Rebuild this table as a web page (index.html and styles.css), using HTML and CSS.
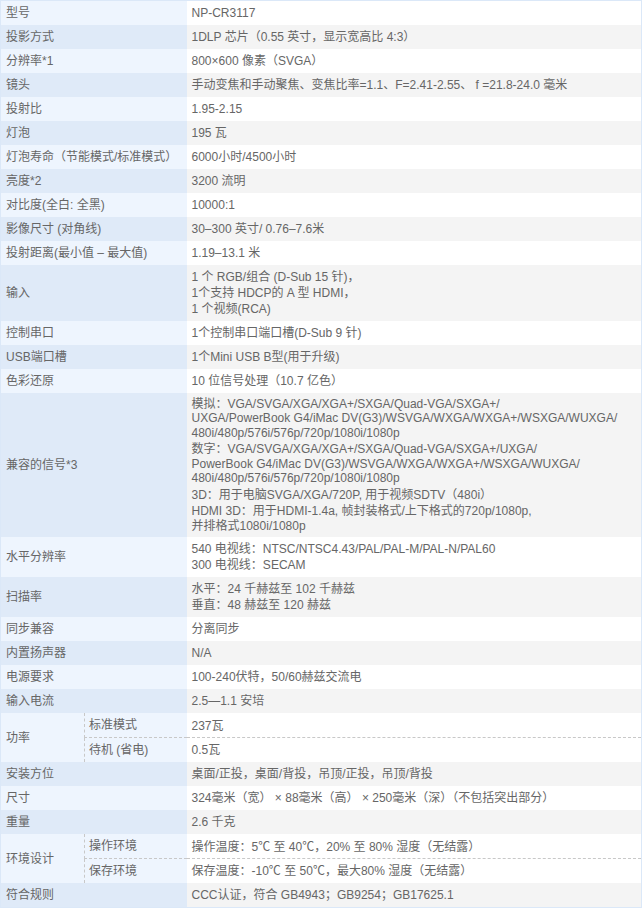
FILE: index.html
```html
<!DOCTYPE html>
<html lang="zh">
<head>
<meta charset="utf-8">
<link rel="stylesheet" href="styles.css">
</head>
<body>
<table class="spec">
<colgroup><col class="c1"><col class="c2"><col class="c3"></colgroup>
<tbody>
<tr class="odd"><th colspan="2">型号</th><td>NP-CR3117</td></tr>
<tr class="even"><th colspan="2">投影方式</th><td>1DLP 芯片（0.55 英寸，显示宽高比 4:3）</td></tr>
<tr class="odd"><th colspan="2">分辨率*1</th><td>800×600 像素（SVGA）</td></tr>
<tr class="even"><th colspan="2">镜头</th><td>手动变焦和手动聚焦、变焦比率=1.1、F=2.41-2.55、 f =21.8-24.0 毫米</td></tr>
<tr class="odd"><th colspan="2">投射比</th><td>1.95-2.15</td></tr>
<tr class="even"><th colspan="2">灯泡</th><td>195 瓦</td></tr>
<tr class="odd"><th colspan="2">灯泡寿命（节能模式/标准模式）</th><td>6000小时/4500小时</td></tr>
<tr class="even"><th colspan="2">亮度*2</th><td>3200 流明</td></tr>
<tr class="odd"><th colspan="2">对比度(全白: 全黑)</th><td>10000:1</td></tr>
<tr class="even"><th colspan="2">影像尺寸 (对角线)</th><td>30–300 英寸/ 0.76–7.6米</td></tr>
<tr class="odd"><th colspan="2">投射距离(最小值 – 最大值)</th><td>1.19–13.1 米</td></tr>
<tr class="even"><th colspan="2">输入</th><td>1 个 RGB/组合 (D-Sub 15 针)，<br>1个支持 HDCP的 A 型 HDMI，<br>1 个视频(RCA)</td></tr>
<tr class="odd"><th colspan="2">控制串口</th><td>1个控制串口端口槽(D-Sub 9 针)</td></tr>
<tr class="even"><th colspan="2">USB端口槽</th><td>1个Mini USB B型(用于升级)</td></tr>
<tr class="odd"><th colspan="2">色彩还原</th><td>10 位信号处理（10.7 亿色）</td></tr>
<tr class="even tall"><th colspan="2">兼容的信号*3</th><td class="paras">
<p>模拟：VGA/SVGA/XGA/XGA+/SXGA/Quad-VGA/SXGA+/<br>UXGA/PowerBook G4/iMac DV(G3)/WSVGA/WXGA/WXGA+/WSXGA/WUXGA/<br>480i/480p/576i/576p/720p/1080i/1080p</p>
<p>数字：VGA/SVGA/XGA/XGA+/SXGA/Quad-VGA/SXGA+/UXGA/<br>PowerBook G4/iMac DV(G3)/WSVGA/WXGA/WXGA+/WSXGA/WUXGA/<br>480i/480p/576i/576p/720p/1080i/1080p</p>
<p>3D：用于电脑SVGA/XGA/720P, 用于视频SDTV（480i）</p>
<p>HDMI 3D：用于HDMI-1.4a, 帧封装格式/上下格式的720p/1080p,<br>并排格式1080i/1080p</p>
</td></tr>
<tr class="odd"><th colspan="2">水平分辨率</th><td>540 电视线：NTSC/NTSC4.43/PAL/PAL-M/PAL-N/PAL60<br>300 电视线：SECAM</td></tr>
<tr class="even"><th colspan="2">扫描率</th><td>水平：24 千赫兹至 102 千赫兹<br>垂直：48 赫兹至 120 赫兹</td></tr>
<tr class="odd"><th colspan="2">同步兼容</th><td>分离同步</td></tr>
<tr class="even"><th colspan="2">内置扬声器</th><td>N/A</td></tr>
<tr class="odd"><th colspan="2">电源要求</th><td>100-240伏特，50/60赫兹交流电</td></tr>
<tr class="even"><th colspan="2">输入电流</th><td>2.5—1.1 安培</td></tr>
<tr class="odd"><th rowspan="2">功率</th><th class="sub first">标准模式</th><td class="first">237瓦</td></tr>
<tr class="odd"><th class="sub">待机 (省电)</th><td>0.5瓦</td></tr>
<tr class="even"><th colspan="2">安装方位</th><td>桌面/正投，桌面/背投，吊顶/正投，吊顶/背投</td></tr>
<tr class="odd"><th colspan="2">尺寸</th><td>324毫米（宽） × 88毫米（高） × 250毫米（深）（不包括突出部分）</td></tr>
<tr class="even"><th colspan="2">重量</th><td>2.6 千克</td></tr>
<tr class="odd"><th rowspan="2">环境设计</th><th class="sub first">操作环境</th><td class="first">操作温度：5℃ 至 40℃，20% 至 80% 湿度（无结露）</td></tr>
<tr class="odd"><th class="sub">保存环境</th><td>保存温度：-10℃ 至 50℃，最大80% 湿度（无结露）</td></tr>
<tr class="even"><th colspan="2">符合规则</th><td>CCC认证，符合 GB4943；GB9254；GB17625.1</td></tr>
</tbody>
</table>
</body>
</html>
```
FILE: styles.css
```css
html, body {
  margin: 0;
  padding: 0;
  background: #ffffff;
}
.spec {
  width: 642px;
  table-layout: fixed;
  border-collapse: collapse;
  border: 1px solid #dbe8f8;
  font-family: "Liberation Sans", Arial, "Noto Sans CJK SC", sans-serif;
  font-size: 12px;
  color: #666666;
}
.c1 { width: 84px; }
.c2 { width: 102px; }
.spec th,
.spec td {
  padding: 4px 5px;
  line-height: 16px;
  font-weight: normal;
  text-align: left;
  vertical-align: middle;
}
.spec td { padding-left: 5px; }
.odd th { background: #eef5fe; }
.even th { background: #dfeaf8; }
.odd td { background: #ffffff; }
.even td { background: #f4f4f4; }
.spec th.sub {
  border-left: 1px dashed #c8c8c8;
  padding-left: 4px;
  padding-top: 4px;
  padding-bottom: 4px;
}
.spec .first {
  border-bottom: 1px dashed #c8c8c8;
  padding-bottom: 3px;
}
.tall td { height: 136px; }
.paras p {
  margin: 0;
  line-height: 14.2px;
}
.paras p + p { margin-top: 2.6px; }
```
